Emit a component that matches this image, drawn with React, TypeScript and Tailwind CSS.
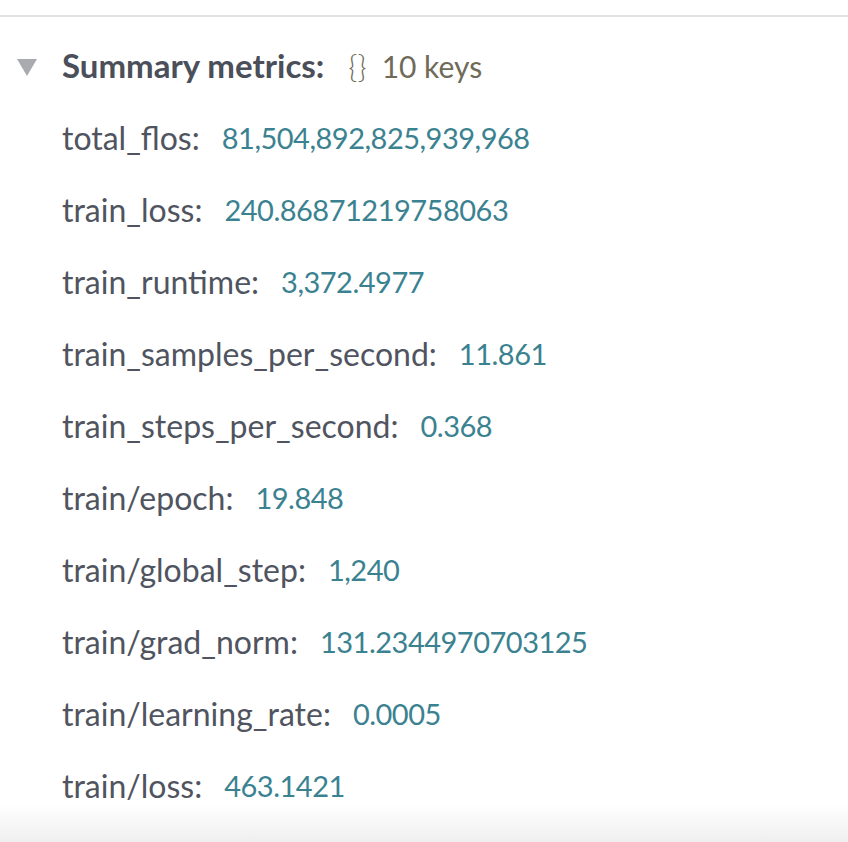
const metrics: [string, string][] = [
  ["total_flos", "81,504,892,825,939,968"],
  ["train_loss", "240.86871219758063"],
  ["train_runtime", "3,372.4977"],
  ["train_samples_per_second", "11.861"],
  ["train_steps_per_second", "0.368"],
  ["train/epoch", "19.848"],
  ["train/global_step", "1,240"],
  ["train/grad_norm", "131.2344970703125"],
  ["train/learning_rate", "0.0005"],
  ["train/loss", "463.1421"],
]

export default function App() {
  return (
    <div
      className="relative h-[842px] w-full overflow-hidden bg-white"
      style={{ fontFamily: "Lato, 'Open Sans', sans-serif" }}
    >
      <div className="h-[15px]" />
      <div className="h-[2px] bg-[#e2e2e2]" />
      <div className="h-[13px]" />

      <div className="flex h-[72px] items-center">
        <div className="flex w-[62px] justify-start pl-[17px]">
          <svg width="20" height="18" viewBox="0 0 20 18" className="mt-[3px]">
            <polygon points="0,0 20,0 10,17" fill="#a9abb1" />
          </svg>
        </div>
        <span className="text-[33px] font-bold text-[#4b4f59]">Summary metrics:</span>
        <span className="ml-[24px] text-[31px] font-light text-[#6f6b58]">{"{}"}</span>
        <span className="ml-[15px] text-[30px] text-[#6f6b58]">10 keys</span>
      </div>

      <div className="flex flex-col">
        {metrics.map(([key, value]) => (
          <div key={key} className="flex h-[72px] items-center pl-[62px]">
            <span className="text-[32px] text-[#4f5460]">{key}:</span>
            <span className="ml-[22px] text-[29px] tracking-[-0.5px] text-[#3b8291]">{value}</span>
          </div>
        ))}
      </div>

      <div className="pointer-events-none absolute inset-x-0 bottom-0 h-[38px] bg-gradient-to-b from-white/0 to-[#efefef]" />
    </div>
  )
}
